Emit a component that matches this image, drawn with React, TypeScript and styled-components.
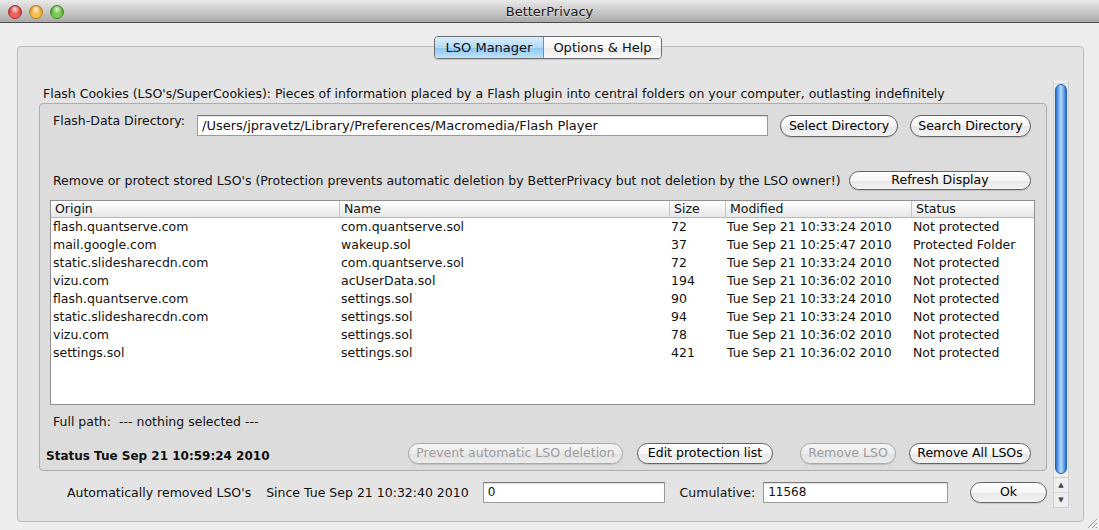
import { FunctionComponent } from 'react';
import styled, { createGlobalStyle } from 'styled-components';

const GlobalStyle = createGlobalStyle`
  html, body {
    margin: 0;
    padding: 0;
    background: #ededed;
  }
  body {
    font-family: "DejaVu Sans", "Noto Sans", sans-serif;
    font-size: 12.5px;
    color: #111;
  }
`;

const Window = styled.div`
  position: relative;
  width: 1099px;
  height: 530px;
  display: flex;
  flex-direction: column;
  background: #ededed;
  overflow: hidden;
`;

const TitleBar = styled.div`
  display: grid;
  grid-template-columns: 1fr auto 1fr;
  align-items: center;
  background: linear-gradient(#e9e9e9, #c4c4c4 60%, #a9a9a9);
  border-bottom: 1px solid #4f4f4f;
  box-sizing: border-box;
  height: 23px;
`;

const Lights = styled.div`
  display: flex;
  gap: 7px;
  padding-left: 8px;
  padding-top: 1px;
`;

const Light = styled.span<{ $color: string; $edge: string }>`
  width: 14px;
  height: 14px;
  border-radius: 50%;
  box-sizing: border-box;
  border: 1px solid ${(p) => p.$edge};
  background:
    radial-gradient(circle at 50% 25%, rgba(255, 255, 255, 0.85) 0, rgba(255, 255, 255, 0) 45%),
    radial-gradient(circle at 50% 75%, ${(p) => p.$color} 30%, ${(p) => p.$edge} 100%);
`;

const Title = styled.div`
  font-size: 13px;
  color: #1a1a1a;
  text-shadow: 0 1px 0 rgba(255, 255, 255, 0.5);
`;

const Body = styled.div`
  flex: 1;
  padding: 23px 16px 8px 17px;
  display: flex;
`;

const Group = styled.div`
  flex: 1;
  display: flex;
  flex-direction: column;
  border: 1px solid #bcbcbc;
  border-radius: 4px;
  background: #e4e4e4;
  padding: 0 14px 0 21px;
`;

const Tabs = styled.div`
  align-self: center;
  display: flex;
  margin-top: -11px;
  margin-left: -12px;
  height: 21px;
  border: 1px solid #6e6e6e;
  border-radius: 4px;
  overflow: hidden;
  box-shadow: 0 1px 1px rgba(0, 0, 0, 0.15);
`;

const Tab = styled.div<{ $active?: boolean }>`
  display: flex;
  align-items: center;
  justify-content: center;
  font-size: 13px;
  white-space: nowrap;
  width: ${(p) => (p.$active ? 108 : 117)}px;
  background: ${(p) =>
    p.$active
      ? 'linear-gradient(#d9edfc, #b3daf8 50%, #8fc6f2 51%, #bfe2fb)'
      : 'linear-gradient(#ffffff, #f6f6f6 50%, #ebebeb 51%, #f7f7f7)'};
  & + & {
    border-left: 1px solid #8a8a8a;
  }
`;

const Content = styled.div`
  display: flex;
  gap: 6px;
  margin-top: 22px;
`;

const Main = styled.div`
  width: 1008px;
  display: flex;
  flex-direction: column;
`;

const Heading = styled.div`
  line-height: 16px;
  padding: 5px 0 1px 4px;
  white-space: nowrap;
`;

const Panel = styled.div`
  height: 368px;
  box-sizing: border-box;
  border: 1px solid #adadad;
  border-radius: 4px;
  background: #dcdcdc;
  padding: 11px 11px 5px 10px;
  display: flex;
  flex-direction: column;
`;

const DirRow = styled.div`
  display: flex;
  align-items: flex-start;
  padding: 0 4px 0 3px;
`;

const Label = styled.div`
  line-height: 16px;
  white-space: nowrap;
`;

const DirLabel = styled(Label)`
  width: 144px;
  margin-top: -2px;
`;

const Field = styled.div<{ $width: number }>`
  width: ${(p) => p.$width}px;
  height: 21px;
  box-sizing: border-box;
  background: #fff;
  border: 1px solid #9a9a9a;
  border-top-color: #7a7a7a;
  box-shadow: inset 0 1px 1px rgba(0, 0, 0, 0.12);
  padding: 2px 4px 0;
  line-height: 16px;
  white-space: nowrap;
  overflow: hidden;
`;

const PathField = styled(Field)`
  font-size: 13px;
  margin-right: 12px;
`;

const Button = styled.button<{ $width: number; $height?: number; $disabled?: boolean }>`
  width: ${(p) => p.$width}px;
  height: ${(p) => p.$height ?? 22}px;
  box-sizing: border-box;
  padding: 0;
  border-radius: 11px;
  font-family: inherit;
  font-size: 12.5px;
  line-height: 1;
  color: ${(p) => (p.$disabled ? '#9b9b9b' : '#000')};
  border: 1px solid ${(p) => (p.$disabled ? '#a9a9a9' : '#646464')};
  background: ${(p) =>
    p.$disabled
      ? 'linear-gradient(#f4f4f4, #ececec 50%, #e2e2e2 51%, #ececec)'
      : 'linear-gradient(#ffffff, #f5f5f5 50%, #e8e8e8 51%, #f3f3f3)'};
  box-shadow: 0 1px 1px rgba(0, 0, 0, 0.12);
  white-space: nowrap;
  flex-shrink: 0;
`;

const Spacer = styled.div<{ $w: number }>`
  width: ${(p) => p.$w}px;
  flex-shrink: 0;
`;

const RemoveRow = styled.div`
  display: flex;
  align-items: center;
  justify-content: space-between;
  margin-top: 34px;
  padding: 0 4px 0 3px;
`;

const Table = styled.div`
  margin-top: 10px;
  height: 205px;
  box-sizing: border-box;
  background: #fff;
  border: 1px solid #8f8f8f;
  display: flex;
  flex-direction: column;
`;

const columns = '288px 330px 56px 186px 1fr';

const HeaderRow = styled.div`
  display: grid;
  grid-template-columns: ${columns};
  height: 16px;
  background: linear-gradient(#ffffff, #f3f3f3 50%, #e6e6e6);
  border-bottom: 1px solid #b9b9b9;
`;

const HeaderCell = styled.div`
  padding-left: 4px;
  line-height: 16px;
  & + & {
    border-left: 1px solid #c4c4c4;
  }
`;

const Row = styled.div`
  display: grid;
  grid-template-columns: ${columns};
  height: 18px;
  line-height: 18px;
`;

const Cell = styled.div`
  padding-left: 2px;
  white-space: nowrap;
  overflow: hidden;
`;

const FullPath = styled.div`
  display: flex;
  gap: 8px;
  margin-top: 9px;
  padding-left: 3px;
  line-height: 16px;
`;

const ActionRow = styled.div`
  display: flex;
  align-items: center;
  margin-top: 13px;
  margin-left: -4px;
  padding-right: 4px;
`;

const StatusText = styled.div`
  font-weight: bold;
  font-size: 12px;
  flex: 1;
  padding-top: 4px;
  white-space: nowrap;
`;

const BottomRow = styled.div`
  display: flex;
  align-items: center;
  margin-top: 11px;
  padding-left: 28px;
`;

const Text = styled.div<{ $ml?: number }>`
  margin-left: ${(p) => p.$ml ?? 0}px;
  white-space: nowrap;
  line-height: 16px;
`;

const SmallField = styled(Field)<{ $ml: number }>`
  margin-left: ${(p) => p.$ml}px;
  font-size: 12px;
  padding-top: 1px;
`;

const Scrollbar = styled.div`
  width: 16px;
  height: 427px;
  box-sizing: border-box;
  display: flex;
  flex-direction: column;
  background: #eeeeee;
  border-left: 1px solid #cfcfcf;
  border-right: 1px solid #cfcfcf;
  border-bottom: 1px solid #cfcfcf;
`;

const Cap = styled.div`
  height: 3px;
  background: linear-gradient(#fafafa, #d6d6d6);
`;

const Thumb = styled.div`
  height: 391px;
  margin: 0 1px;
  border-radius: 7px;
  border: 1px solid #1f5fb8;
  box-sizing: border-box;
  background: linear-gradient(90deg, #2b6fd0, #7fb4ef 30%, #b8dafb 50%, #7fb4ef 70%, #2b6fd0);
`;

const Arrows = styled.div`
  margin-top: 3px;
  display: flex;
  flex-direction: column;
  border-top: 1px solid #cfcfcf;
`;

const Arrow = styled.div`
  height: 14px;
  font-size: 7px;
  line-height: 14px;
  text-align: center;
  color: #444;
  & + & {
    border-top: 1px solid #d8d8d8;
  }
`;

const Grip = styled.svg`
  position: absolute;
  right: 1px;
  bottom: 1px;
`;

interface Lso {
  origin: string;
  name: string;
  size: number;
  modified: string;
  status: string;
}

const rows: Lso[] = [
  { origin: 'flash.quantserve.com', name: 'com.quantserve.sol', size: 72, modified: 'Tue Sep 21 10:33:24 2010', status: 'Not protected' },
  { origin: 'mail.google.com', name: 'wakeup.sol', size: 37, modified: 'Tue Sep 21 10:25:47 2010', status: 'Protected Folder' },
  { origin: 'static.slidesharecdn.com', name: 'com.quantserve.sol', size: 72, modified: 'Tue Sep 21 10:33:24 2010', status: 'Not protected' },
  { origin: 'vizu.com', name: 'acUserData.sol', size: 194, modified: 'Tue Sep 21 10:36:02 2010', status: 'Not protected' },
  { origin: 'flash.quantserve.com', name: 'settings.sol', size: 90, modified: 'Tue Sep 21 10:33:24 2010', status: 'Not protected' },
  { origin: 'static.slidesharecdn.com', name: 'settings.sol', size: 94, modified: 'Tue Sep 21 10:33:24 2010', status: 'Not protected' },
  { origin: 'vizu.com', name: 'settings.sol', size: 78, modified: 'Tue Sep 21 10:36:02 2010', status: 'Not protected' },
  { origin: 'settings.sol', name: 'settings.sol', size: 421, modified: 'Tue Sep 21 10:36:02 2010', status: 'Not protected' },
];

const App: FunctionComponent = () => (
  <Window>
    <GlobalStyle />
    <TitleBar>
      <Lights>
        <Light $color="#f0605a" $edge="#b02a25" />
        <Light $color="#f7c24f" $edge="#c07a14" />
        <Light $color="#7ccb55" $edge="#3f8a24" />
      </Lights>
      <Title>BetterPrivacy</Title>
      <div />
    </TitleBar>
    <Body>
      <Group>
        <Tabs>
          <Tab $active>LSO Manager</Tab>
          <Tab>Options &amp; Help</Tab>
        </Tabs>
        <Content>
          <Main>
            <Heading>
              Flash Cookies (LSO&apos;s/SuperCookies): Pieces of information placed by a Flash plugin into central folders on your computer, outlasting indefinitely
            </Heading>
            <Panel>
              <DirRow>
                <DirLabel>Flash-Data Directory:</DirLabel>
                <PathField $width={571}>/Users/jpravetz/Library/Preferences/Macromedia/Flash Player</PathField>
                <Button $width={118}>Select Directory</Button>
                <Spacer $w={12} />
                <Button $width={121}>Search Directory</Button>
              </DirRow>
              <RemoveRow>
                <Label>
                  Remove or protect stored LSO&apos;s (Protection prevents automatic deletion by BetterPrivacy but not deletion by the LSO owner!)
                </Label>
                <Button $width={182} $height={19}>Refresh Display</Button>
              </RemoveRow>
              <Table>
                <HeaderRow>
                  <HeaderCell>Origin</HeaderCell>
                  <HeaderCell>Name</HeaderCell>
                  <HeaderCell>Size</HeaderCell>
                  <HeaderCell>Modified</HeaderCell>
                  <HeaderCell>Status</HeaderCell>
                </HeaderRow>
                {rows.map((r, i) => (
                  <Row key={i}>
                    <Cell>{r.origin}</Cell>
                    <Cell>{r.name}</Cell>
                    <Cell>{r.size}</Cell>
                    <Cell>{r.modified}</Cell>
                    <Cell>{r.status}</Cell>
                  </Row>
                ))}
              </Table>
              <FullPath>
                <span>Full path:</span>
                <span>--- nothing selected ---</span>
              </FullPath>
              <ActionRow>
                <StatusText>Status Tue Sep 21 10:59:24 2010</StatusText>
                <Button $width={215} $height={21} $disabled>Prevent automatic LSO deletion</Button>
                <Spacer $w={14} />
                <Button $width={136} $height={21}>Edit protection list</Button>
                <Spacer $w={27} />
                <Button $width={96} $height={21} $disabled>Remove LSO</Button>
                <Spacer $w={13} />
                <Button $width={122} $height={21}>Remove All LSOs</Button>
              </ActionRow>
            </Panel>
            <BottomRow>
              <Text>Automatically removed LSO&apos;s</Text>
              <Text $ml={15}>Since Tue Sep 21 10:32:40 2010</Text>
              <SmallField $width={182} $ml={14}>0</SmallField>
              <Text $ml={15}>Cumulative:</Text>
              <SmallField $width={185} $ml={8}>11568</SmallField>
              <Spacer $w={22} />
              <Button $width={77} $height={21}>Ok</Button>
            </BottomRow>
          </Main>
          <Scrollbar>
            <Cap />
            <Thumb />
            <Arrows>
              <Arrow>▲</Arrow>
              <Arrow>▼</Arrow>
            </Arrows>
          </Scrollbar>
        </Content>
      </Group>
    </Body>
    <Grip width="12" height="12" viewBox="0 0 12 12">
      <path d="M11 2 L2 11 M11 6 L6 11 M11 10 L10 11" stroke="#9a9a9a" strokeWidth="1" />
    </Grip>
  </Window>
);

export default App;
